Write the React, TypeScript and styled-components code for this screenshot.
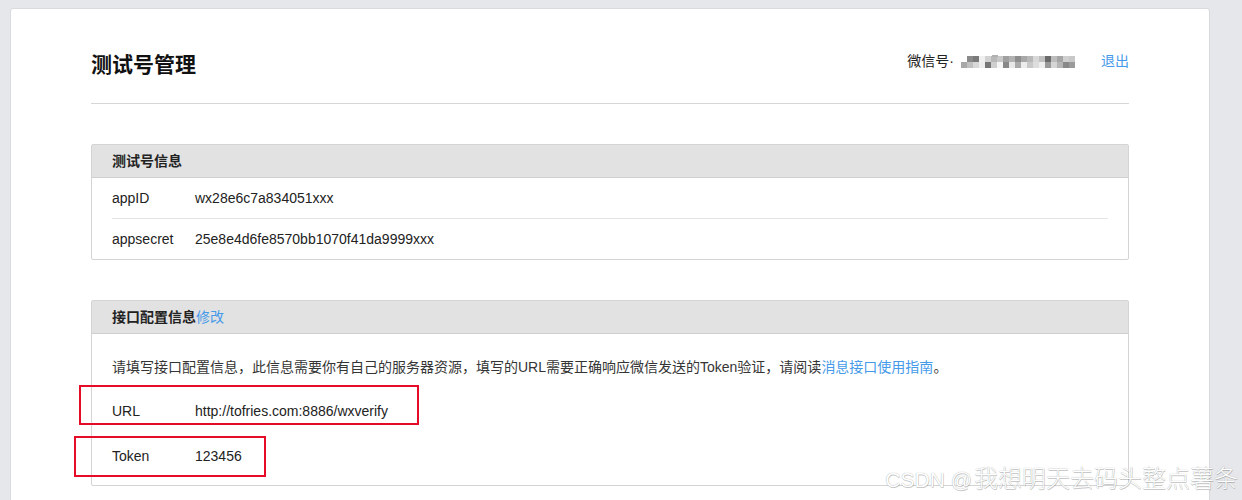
import React from "react";
import styled, { createGlobalStyle } from "styled-components";

const GlobalStyle = createGlobalStyle`
  html, body {
    margin: 0;
    padding: 0;
    background: #e6e7eb;
  }
  body {
    font-family: "Liberation Sans", "Noto Sans CJK SC", sans-serif;
    font-size: 14px;
    color: #222;
  }
`;

const Page = styled.div`
  position: relative;
  height: 500px;
  overflow: hidden;
  padding-top: 8px;
  box-sizing: border-box;
`;

const Card = styled.div`
  margin-left: 10px;
  width: 1200px;
  box-sizing: border-box;
  background: #fff;
  border: 1px solid #d9dadd;
  border-radius: 3px;
  padding: 0 80px 60px 80px;
  min-height: 560px;
`;

const Header = styled.div`
  display: flex;
  justify-content: space-between;
  align-items: flex-start;
  padding-top: 45px;
  padding-bottom: 28px;
  border-bottom: 1px solid #d6d6d6;
`;

const Title = styled.h1`
  margin: 0;
  font-size: 21px;
  line-height: 21px;
  font-weight: 700;
  color: #111;
`;

const Account = styled.div`
  display: flex;
  align-items: center;
  line-height: 14px;
  font-size: 14px;
  color: #222;
`;

const AccountLabel = styled.span`
  margin-right: 7px;
`;

const Link = styled.a`
  color: #459ae9;
  text-decoration: none;
  cursor: pointer;
`;

const Logout = styled(Link)`
  margin-left: 25px;
`;

const Panel = styled.section`
  margin-top: 40px;
  border: 1px solid #d4d4d4;
  border-radius: 2px;
`;

const PanelHead = styled.div`
  height: 32px;
  line-height: 32px;
  padding: 0 20px;
  background: #e2e2e2;
  border-bottom: 1px solid #cfcfcf;
  font-weight: 700;
  font-size: 14px;
  color: #222;
`;

const HeadLink = styled(Link)`
  font-weight: 400;
`;

const PanelBody = styled.div<{ $pad?: string }>`
  padding: ${(p) => p.$pad || "0 20px"};
`;

const Row = styled.div<{ $h: number; $line?: boolean }>`
  position: relative;
  display: flex;
  align-items: center;
  height: ${(p) => p.$h}px;
  border-bottom: ${(p) => (p.$line ? "1px solid #e4e4e4" : "none")};
  box-sizing: border-box;
`;

const Label = styled.span`
  width: 83px;
  flex: none;
  color: #222;
`;

const Value = styled.span`
  color: #222;
`;

const Note = styled.div`
  height: 45px;
  display: flex;
  align-items: center;
  color: #353535;
`;

const Highlight = styled.div<{ $l: number; $t: number; $w: number; $h: number }>`
  position: absolute;
  left: ${(p) => p.$l}px;
  top: ${(p) => p.$t}px;
  width: ${(p) => p.$w}px;
  height: ${(p) => p.$h}px;
  border: 2.5px solid #e60c28;
  box-sizing: border-box;
  pointer-events: none;
`;

const Watermark = styled.div`
  position: absolute;
  right: 4px;
  bottom: 6px;
  font-family: "Noto Sans CJK SC", sans-serif;
  font-size: 24px;
  font-weight: 300;
  line-height: 28px;
  color: #ffffff;
  text-shadow: 0 0 1px #9a9a9a, 0.5px 0.5px 0.5px rgba(0, 0, 0, 0.2);
  white-space: nowrap;
`;

const WatermarkLatin = styled.span`
  font-family: "Liberation Sans", sans-serif;
  font-size: 21px;
  margin-right: 2px;
`;

const topRow = [
  "", "#8a8a8a", "#7a7a7a", "#f0f0f0", "#d2d2d2", "#b8b8b8", "#c8c8c8", "#a0a0a0",
  "#b2b2b2", "#8e8e8e", "#a8a8a8", "#b8b8b8", "#d8d8d8", "#c0c0c0", "#6a6a6a",
  "#bdbdbd", "#a5a5a5", "#d0d0d0", "#c8c8c8",
];
const bottomRow = [
  "#a8a8a8", "#c0c0c0", "#d8d8d8", "#eeeeee", "#777777", "#cfcfcf", "#f5f5f5", "#888888",
  "#e8e8e8", "#aaaaaa", "#ececec", "#c8c8c8", "#dddddd", "#eeeeee", "#999999",
  "#d5d5d5", "#b5b5b5", "#888888", "#9a9a9a",
];

function Mosaic() {
  return (
    <svg width="115" height="13" viewBox="0 0 115 13" style={{ display: "block" }}>
      {topRow.map((c, i) =>
        c ? <rect key={"t" + i} x={i * 6} y={1} width={6} height={6} fill={c} /> : null
      )}
      <rect x={31} y={0} width={6} height={2} fill="#b0b0b0" />
      {bottomRow.map((c, i) => (
        <rect key={"b" + i} x={i * 6} y={7} width={6} height={6} fill={c} />
      ))}
    </svg>
  );
}

export default function App() {
  return (
    <>
      <GlobalStyle />
      <Page>
        <Card>
          <Header>
            <Title>测试号管理</Title>
            <Account>
              <AccountLabel>微信号·</AccountLabel>
              <Mosaic />
              <Logout>退出</Logout>
            </Account>
          </Header>

          <Panel>
            <PanelHead>测试号信息</PanelHead>
            <PanelBody>
              <Row $h={41} $line>
                <Label>appID</Label>
                <Value>wx28e6c7a834051xxx</Value>
              </Row>
              <Row $h={40}>
                <Label>appsecret</Label>
                <Value>25e8e4d6fe8570bb1070f41da9999xxx</Value>
              </Row>
            </PanelBody>
          </Panel>

          <Panel>
            <PanelHead>
              接口配置信息<HeadLink>修改</HeadLink>
            </PanelHead>
            <PanelBody $pad="9px 20px 7px">
              <Note>
                <span>
                  请填写接口配置信息，此信息需要你有自己的服务器资源，填写的URL需要正确响应微信发送的Token验证，请阅读
                  <Link>消息接口使用指南</Link>。
                </span>
              </Note>
              <Row $h={45}>
                <Label>URL</Label>
                <Value>http://tofries.com:8886/wxverify</Value>
                <Highlight $l={-33} $t={-3} $w={340} $h={40} />
              </Row>
              <Row $h={45}>
                <Label>Token</Label>
                <Value>123456</Value>
                <Highlight $l={-38} $t={3} $w={192} $h={41} />
              </Row>
            </PanelBody>
          </Panel>
        </Card>
        <Watermark>
          <WatermarkLatin>CSDN @</WatermarkLatin>我想明天去码头整点薯条
        </Watermark>
      </Page>
    </>
  );
}
